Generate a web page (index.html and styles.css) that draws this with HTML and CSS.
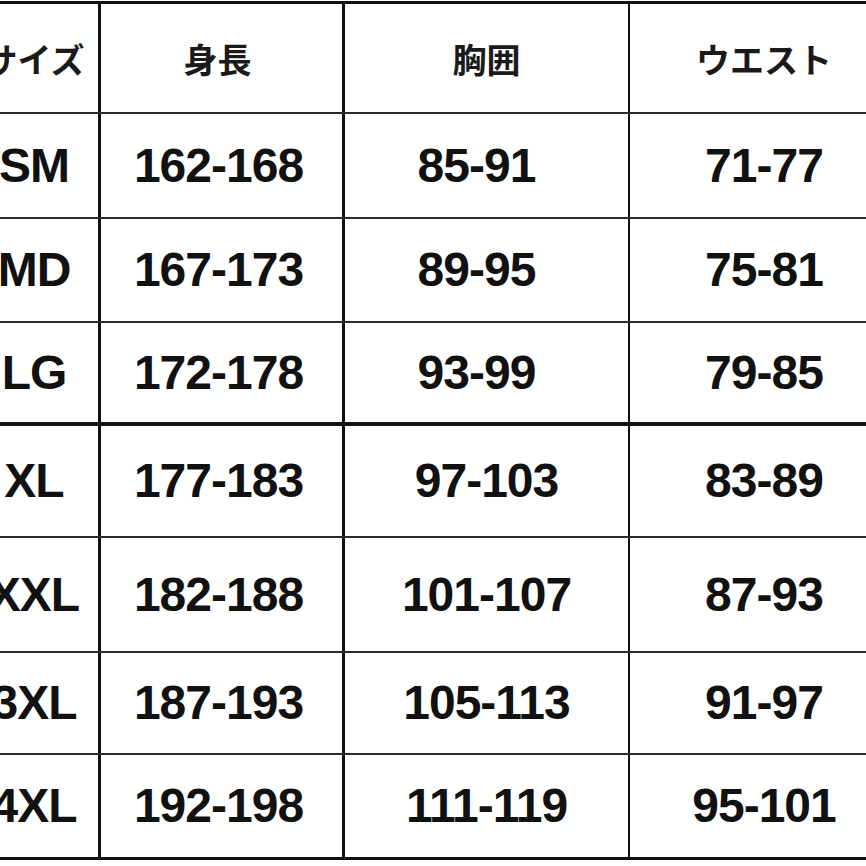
FILE: index.html
```html
<!DOCTYPE html>
<html lang="ja">
<head>
<meta charset="utf-8">
<title>サイズ表</title>
<link rel="stylesheet" href="styles.css">
</head>
<body>
<div class="viewport">
  <div class="chart">
    <div class="row head">
      <div class="cell c1">サイズ</div>
      <div class="cell c2">身長</div>
      <div class="cell c3">胸囲</div>
      <div class="cell c4">ウエスト</div>
    </div>
    <div class="row r-sm">
      <div class="cell c1">SM</div>
      <div class="cell c2">162-168</div>
      <div class="cell c3 short">85-91</div>
      <div class="cell c4">71-77</div>
    </div>
    <div class="row r-md">
      <div class="cell c1">MD</div>
      <div class="cell c2">167-173</div>
      <div class="cell c3 short">89-95</div>
      <div class="cell c4">75-81</div>
    </div>
    <div class="row r-lg thick">
      <div class="cell c1">LG</div>
      <div class="cell c2">172-178</div>
      <div class="cell c3 short">93-99</div>
      <div class="cell c4">79-85</div>
    </div>
    <div class="row r-xl">
      <div class="cell c1">XL</div>
      <div class="cell c2">177-183</div>
      <div class="cell c3">97-103</div>
      <div class="cell c4">83-89</div>
    </div>
    <div class="row r-xxl">
      <div class="cell c1">XXL</div>
      <div class="cell c2">182-188</div>
      <div class="cell c3">101-107</div>
      <div class="cell c4">87-93</div>
    </div>
    <div class="row r-3xl">
      <div class="cell c1">3XL</div>
      <div class="cell c2">187-193</div>
      <div class="cell c3">105-113</div>
      <div class="cell c4">91-97</div>
    </div>
    <div class="row r-4xl last">
      <div class="cell c1">4XL</div>
      <div class="cell c2">192-198</div>
      <div class="cell c3">111-119</div>
      <div class="cell c4">95-101</div>
    </div>
  </div>
</div>
</body>
</html>
```

FILE: styles.css
```css
* {
  box-sizing: border-box;
}

html, body {
  margin: 0;
  padding: 0;
  background: #ffffff;
}

.viewport {
  width: 866px;
  height: 866px;
  overflow: hidden;
  padding-top: 1px;
}

.chart {
  margin-left: -30px;
  width: 928px;
  border-top: 3px solid #111;
  font-family: "Liberation Sans", Arial, sans-serif;
  font-weight: bold;
  font-size: 48px;
  letter-spacing: -1px;
  color: #111;
}

.row {
  display: flex;
  border-bottom: 2px solid #2a2a2a;
}

.row.thick {
  border-bottom: 4px solid #111;
}

.row.last {
  border-bottom: 3px solid #111;
}

.head   { height: 110px; }
.r-sm   { height: 105px; }
.r-md   { height: 104px; }
.r-lg   { height: 103px; }
.r-xl   { height: 112px; }
.r-xxl  { height: 115px; }
.r-3xl  { height: 102px; }
.r-4xl  { height: 105px; }

.cell {
  display: flex;
  align-items: center;
  justify-content: center;
  white-space: nowrap;
  line-height: 1;
}

.c1 {
  width: 131px;
  border-right: 3px solid #111;
}

.c2 {
  width: 244px;
  border-right: 3px solid #111;
  padding-right: 6px;
}

.c3 {
  width: 285px;
  border-right: 2px solid #111;
}

.c3.short {
  padding-right: 20px;
}

.c4 {
  width: 268px;
}

.head .cell {
  font-family: "Noto Sans CJK JP", "Noto Sans", sans-serif;
  font-weight: 700;
  font-size: 34px;
  letter-spacing: 0;
  padding-top: 2px;
  color: #1a1a1a;
}

.head .c2 {
  padding-right: 8px;
}
```
